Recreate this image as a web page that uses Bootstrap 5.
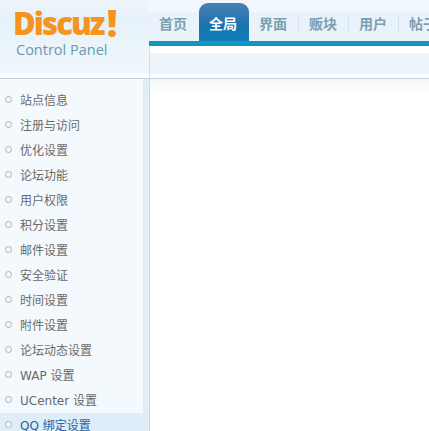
<!DOCTYPE html>
<html lang="zh">
<head>
<meta charset="utf-8">
<title>Discuz! Control Panel</title>
<link href="https://cdn.jsdelivr.net/npm/bootstrap@5.3.0/dist/css/bootstrap.min.css" rel="stylesheet">
<style>
html,body{height:431px;overflow:hidden;background:#fff;font-family:"DejaVu Sans","Noto Sans CJK SC",sans-serif;}
.shell{width:429px;height:431px;overflow:hidden;}
.topzone{height:79px;border-bottom:1px solid #bcd2dd;background:#fff;flex:none;}
.logozone{width:149px;flex:none;padding:7px 0 0 13px;background:linear-gradient(#eff6fb 0,#e5f1f9 20px,#f0f7fc 73px,#fff 73px);}
.logoword{font-family:"Open Sans",sans-serif;font-weight:800;font-size:31px;line-height:32px;letter-spacing:-1.9px;color:#f7941e;white-space:nowrap;}
.logobang{font-size:37px;line-height:32px;margin-left:3px;}
.logosub{font-family:"Open Sans",sans-serif;font-size:14.5px;line-height:18px;color:#6b98ad;margin:2px 0 0 3px;}
.navzone{flex:1 1 auto;min-width:0;overflow:hidden;}
.tabrow{height:41px;padding-top:3px;background:linear-gradient(#f1f7fc 0,#f1f7fc 12px,#e9f2fa 13px,#eaf3fa 100%);}
.tabcell{width:50px;flex:none;height:38px;}
.tabcell a{display:block;height:38px;padding:11px 2px 0 0;text-align:center;font-family:"Noto Sans CJK SC",sans-serif;font-size:14px;font-weight:700;line-height:19px;color:#7b9fb0;text-decoration:none;position:relative;}
.tabcell a.sep::after{content:"";position:absolute;right:0;top:12px;height:18px;width:1px;background:#d5e3ec;}
.tabcell a.on{color:#fff;background:linear-gradient(#4a80b2,#1a74b0 60%,#0f80b8);border-radius:9px 9px 0 0;}
.bluebar{height:5px;background:#1296c1;}
.whitegap{height:7px;background:#fff;border-left:1px solid #cfe0e9;}
.subband{height:21px;background:#edf5fb;border-left:1px solid #cfe0e9;}
.afterband{height:5px;background:#fff;border-left:1px solid #cfe0e9;}
.sidezone{width:149px;flex:none;height:352px;background:linear-gradient(90deg,#f3f9fd 0,#f3f9fd 143px,#e0eef6 143px,#e0eef6 149px);padding-top:9px;}
.sideitem{height:25px;line-height:27px;font-size:12px;padding-left:20px;color:#6a6a6a;position:relative;white-space:nowrap;font-family:"DejaVu Sans","Noto Sans CJK SC",sans-serif;width:143px;}
.sideitem.active{color:#2466a8;background:#deedf7;width:149px;}
.sideitem::before{content:"";position:absolute;left:5px;top:8px;width:7px;height:7px;border:1px solid #b0b0b0;border-radius:50%;background:#f7f7f7;}
.mainzone{flex:1 1 auto;border-left:1px solid #c6dce7;background:linear-gradient(#f4f8fb 0,#fff 14px);}
</style>
</head>
<body>
<div class="shell d-flex flex-column">
  <div class="topzone d-flex">
    <div class="logozone">
      <div class="logoword d-flex align-items-center">Discuz<span class="logobang">!</span></div>
      <div class="logosub">Control Panel</div>
    </div>
    <div class="navzone">
      <div class="tabrow d-flex">
        <div class="tabcell"><a href="#">首页</a></div>
        <div class="tabcell"><a href="#" class="on">全局</a></div>
        <div class="tabcell"><a href="#" class="sep">界面</a></div>
        <div class="tabcell"><a href="#" class="sep">贩块</a></div>
        <div class="tabcell"><a href="#" class="sep">用户</a></div>
        <div class="tabcell"><a href="#">帖子</a></div>
      </div>
      <div class="bluebar"></div>
      <div class="whitegap"></div>
      <div class="subband"></div>
      <div class="afterband"></div>
    </div>
  </div>
  <div class="d-flex flex-grow-1">
    <div class="sidezone">
      <div class="sideitem">站点信息</div>
      <div class="sideitem">注册与访问</div>
      <div class="sideitem">优化设置</div>
      <div class="sideitem">论坛功能</div>
      <div class="sideitem">用户权限</div>
      <div class="sideitem">积分设置</div>
      <div class="sideitem">邮件设置</div>
      <div class="sideitem">安全验证</div>
      <div class="sideitem">时间设置</div>
      <div class="sideitem">附件设置</div>
      <div class="sideitem">论坛动态设置</div>
      <div class="sideitem">WAP 设置</div>
      <div class="sideitem">UCenter 设置</div>
      <div class="sideitem active">QQ 绑定设置</div>
    </div>
    <div class="mainzone"></div>
  </div>
</div>
<script src="https://cdn.jsdelivr.net/npm/bootstrap@5.3.0/dist/js/bootstrap.bundle.min.js"></script>
</body>
</html>
